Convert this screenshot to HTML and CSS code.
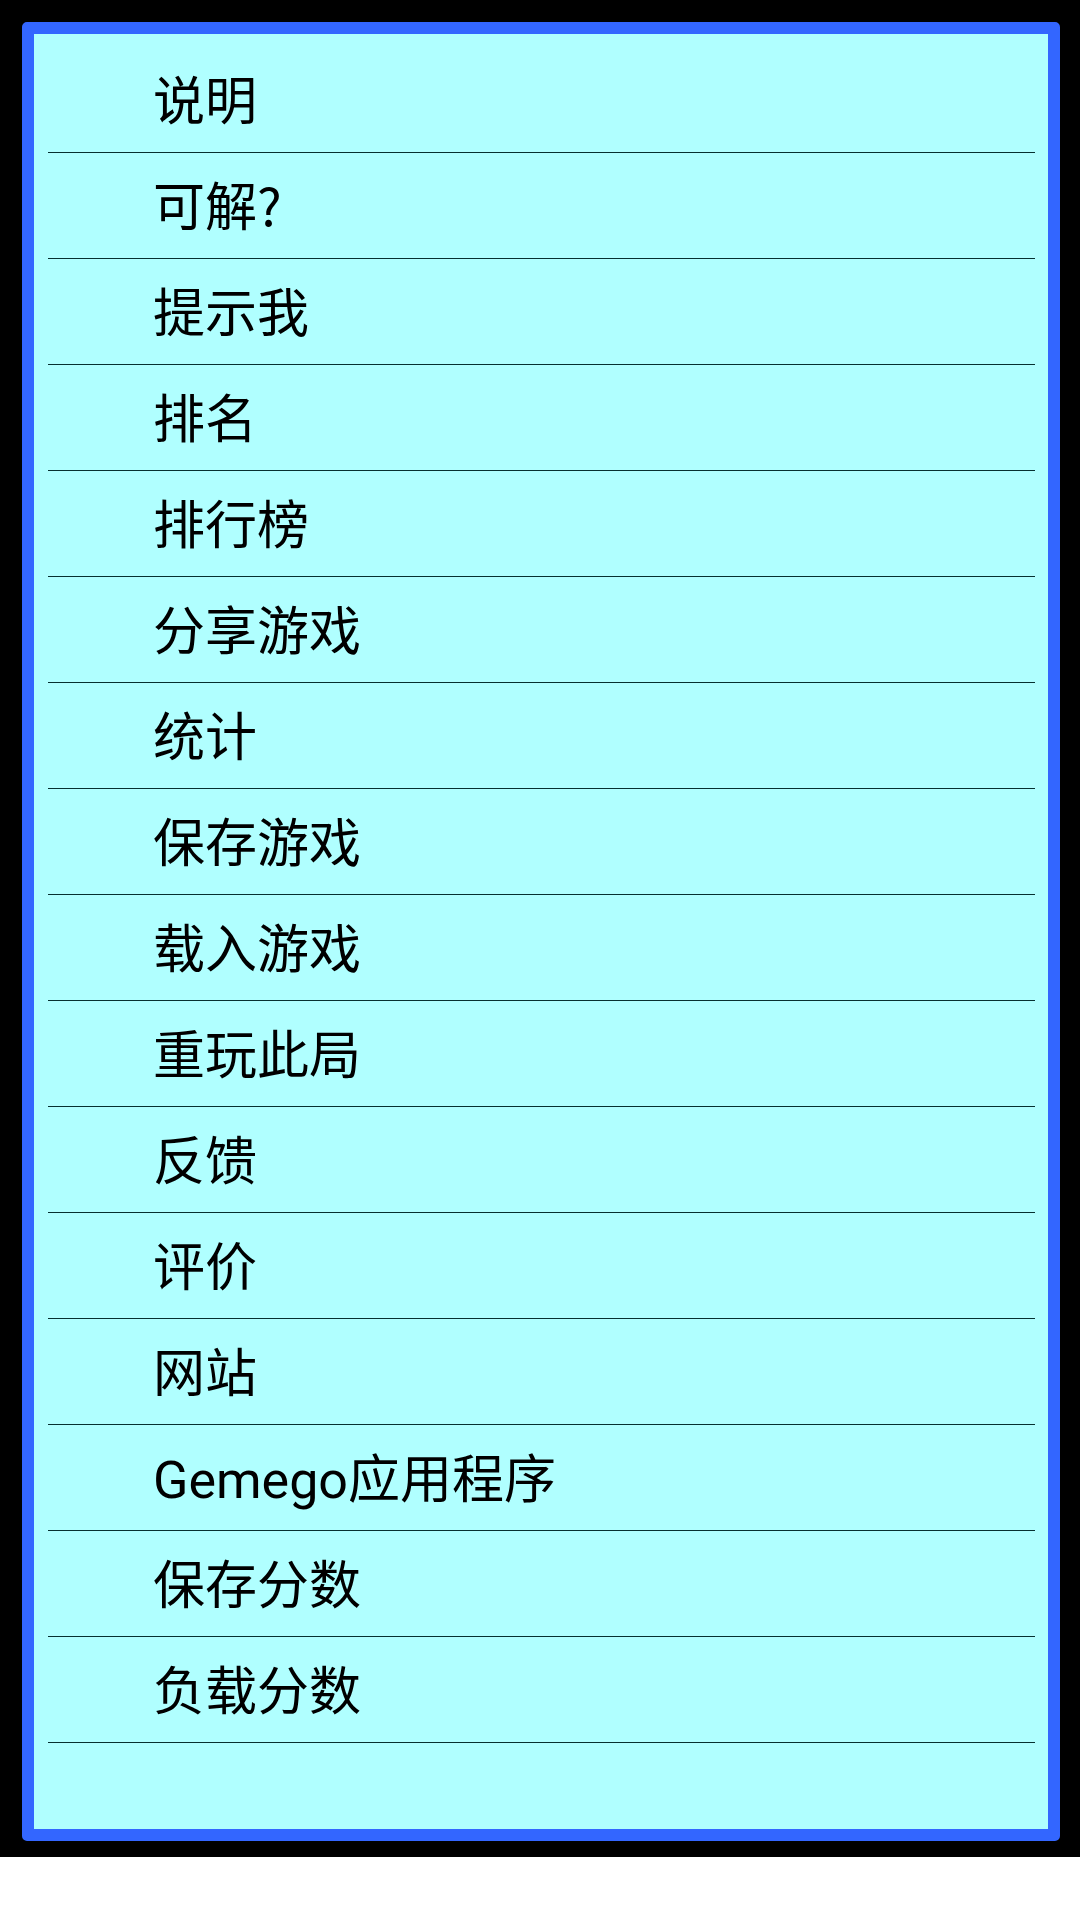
FILE: index.html
```html
<!DOCTYPE html>
<html lang="zh-CN">
    <head>
        <meta charset="utf-8">
        <title>菜单</title>
        <link rel="stylesheet" href="styles.css">
    </head>
    <body>
        <div class="screen">
            <div class="panel">
                <ul class="menu">
                    <li>说明</li>
                    <li>可解<span class="cjk">?</span></li>
                    <li>提示我</li>
                    <li>排名</li>
                    <li>排行榜</li>
                    <li>分享游戏</li>
                    <li>统计</li>
                    <li>保存游戏</li>
                    <li>载入游戏</li>
                    <li>重玩此局</li>
                    <li>反馈</li>
                    <li>评价</li>
                    <li>网站</li>
                    <li>Gemego应用程序</li>
                    <li>保存分数</li>
                    <li>负载分数</li>
                </ul>
            </div>
        </div>
    </body>
</html>
```

FILE: styles.css
```css
html, body {
    margin: 0;
    background: white;
}

.screen {
    background: black;
    height: 1857px;
    box-sizing: border-box;
    padding: 22px 20px 16px 22px;
}

.panel {
    height: 1819px;
    box-sizing: border-box;
    border: 12px solid #3366ff;
    border-radius: 5px;
    background: #b0ffff;
    padding: 13px 13px 0 14px;
}

.menu {
    list-style: none;
    margin: 0;
    padding: 0;
}

.menu li {
    height: 105px;
    box-sizing: border-box;
    border-bottom: 1px solid #063030;
    display: flex;
    align-items: center;
    padding: 0 0 4px 105px;
    font-family: Roboto, "Noto Sans CJK SC", sans-serif;
    font-size: 52px;
    color: black;
}

.menu li {
    height: 106px;
}

.cjk {
    font-family: "Noto Sans CJK SC", sans-serif;
}
```
